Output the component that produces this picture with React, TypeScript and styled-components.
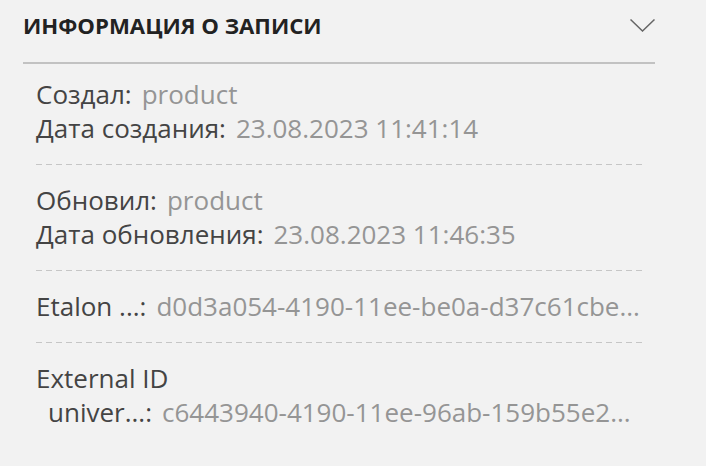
import React from 'react';
import styled, { createGlobalStyle } from 'styled-components';

const GlobalStyle = createGlobalStyle`
  html, body {
    margin: 0;
    padding: 0;
    background: #f2f2f2;
  }
  body {
    font-family: 'Open Sans', 'Noto Sans', sans-serif;
  }
`;

const Panel = styled.section`
  width: 632px;
  margin-left: 23px;
`;

const Header = styled.div`
  display: flex;
  align-items: center;
  justify-content: space-between;
  height: 62px;
  border-bottom: 2px solid #c2c2c2;
`;

const Title = styled.h2`
  margin: 0;
  padding-bottom: 11px;
  font-size: 22.2px;
  font-weight: 700;
  color: #222222;
`;

const Chevron = styled.svg`
  width: 25px;
  height: 13px;
  margin-bottom: 12px;
  color: #666666;
`;

const Body = styled.div`
  padding: 0 11px 0 13px;
`;

const Group = styled.div<{ $last?: boolean }>`
  padding: 18px 0 20px;
  background-image: ${({ $last }) =>
    $last ? 'none' : 'linear-gradient(to right, #c6c6c6 6px, transparent 6px)'};
  background-size: 10px 1px;
  background-repeat: repeat-x;
  background-position: left bottom;

  &:first-child {
    padding-top: 13px;
  }
`;

const Row = styled.div<{ $indent?: boolean }>`
  display: flex;
  align-items: baseline;
  gap: 10px;
  line-height: 34px;
  font-size: 26px;
  white-space: nowrap;
  padding-left: ${({ $indent }) => ($indent ? '12px' : '0')};
`;

const Label = styled.span`
  color: #444444;
  flex-shrink: 0;
`;

const Value = styled.span`
  color: #959595;
`;

interface Field {
  label: string;
  value?: string;
  indent?: boolean;
}

const groups: Field[][] = [
  [
    { label: 'Создал:', value: 'product' },
    { label: 'Дата создания:', value: '23.08.2023 11:41:14' },
  ],
  [
    { label: 'Обновил:', value: 'product' },
    { label: 'Дата обновления:', value: '23.08.2023 11:46:35' },
  ],
  [{ label: 'Etalon ...:', value: 'd0d3a054-4190-11ee-be0a-d37c61cbe...' }],
  [
    { label: 'External ID' },
    { label: 'univer...:', value: 'c6443940-4190-11ee-96ab-159b55e2...', indent: true },
  ],
];

export default function App() {
  return (
    <>
      <GlobalStyle />
      <Panel>
        <Header>
          <Title>ИНФОРМАЦИЯ О ЗАПИСИ</Title>
          <Chevron viewBox="0 0 25 13" fill="none">
            <path d="M0.5 0.5 L12.5 12 L24.5 0.5" stroke="currentColor" strokeWidth="1.5" />
          </Chevron>
        </Header>
        <Body>
          {groups.map((fields, i) => (
            <Group key={i} $last={i === groups.length - 1}>
              {fields.map((f) => (
                <Row key={f.label} $indent={f.indent}>
                  <Label>{f.label}</Label>
                  {f.value && <Value>{f.value}</Value>}
                </Row>
              ))}
            </Group>
          ))}
        </Body>
      </Panel>
    </>
  );
}
